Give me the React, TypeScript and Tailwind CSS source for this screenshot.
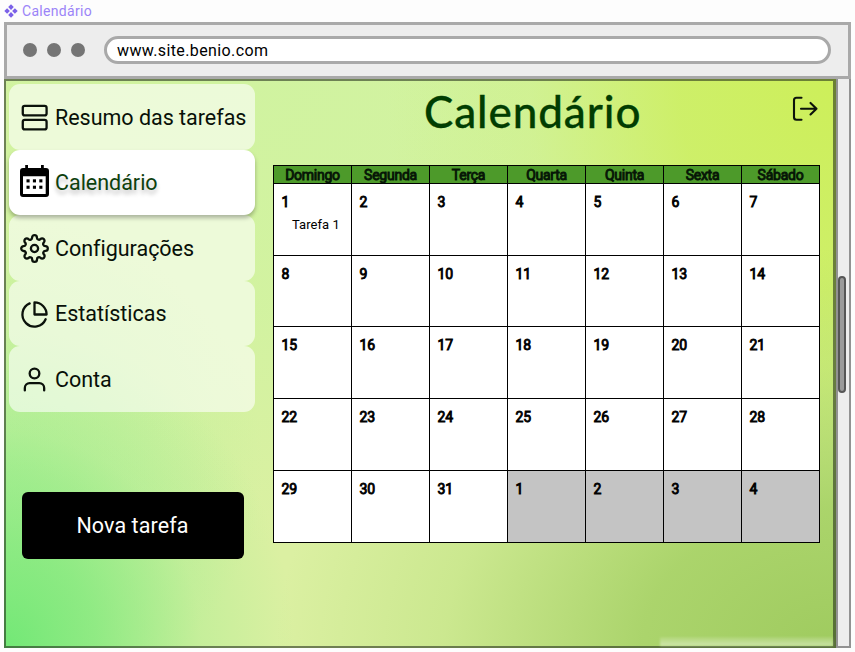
import type { ReactNode } from "react";

const roboto = "font-['Roboto',sans-serif]";

function Stroke({ children, className = "" }: { children: ReactNode; className?: string }) {
  return (
    <svg
      viewBox="0 0 24 24"
      className={`size-[29px] shrink-0 ${className}`}
      fill="none"
      stroke="#0b120b"
      strokeWidth={1.9}
      strokeLinecap="round"
      strokeLinejoin="round"
    >
      {children}
    </svg>
  );
}

const RowsIcon = (
  <Stroke>
    <rect x="2.3" y="2.300" width="19.7" height="7.900" rx="1.6" />
    <rect x="2.3" y="14" width="19.7" height="7.900" rx="1.6" />
  </Stroke>
);

const CalendarIcon = (
  <svg viewBox="0 0 29 32" className="-mt-[3px] h-8 w-[29px] shrink-0">
    <path
      fill="#000"
      fillRule="evenodd"
      d="M5.200 0h2.800v3h13V0h2.800v3H26a3 3 0 0 1 3 3v23a3 3 0 0 1-3 3H3a3 3 0 0 1-3-3V6a3 3 0 0 1 3-3h2.200zM3 11.200V29h22.700V11.200z"
    />
    {[6.5, 12.9, 19.3].map((x) =>
      [14.3, 20.7].map((y) => <rect key={`${x}-${y}`} x={x} y={y} width="3.1" height="3.1" fill="#000" />),
    )}
  </svg>
);

const GearIcon = (
  <Stroke>
    <circle cx="12" cy="12" r="3" />
    <path d="M19.4 15a1.65 1.65 0 0 0 .33 1.82l.06.06a2 2 0 0 1 0 2.83 2 2 0 0 1-2.83 0l-.06-.06a1.65 1.65 0 0 0-1.82-.33 1.65 1.65 0 0 0-1 1.51V21a2 2 0 0 1-2 2 2 2 0 0 1-2-2v-.09A1.65 1.65 0 0 0 9 19.4a1.65 1.65 0 0 0-1.82.33l-.06.06a2 2 0 0 1-2.83 0 2 2 0 0 1 0-2.83l.06-.06a1.65 1.65 0 0 0 .33-1.82 1.65 1.65 0 0 0-1.51-1H3a2 2 0 0 1-2-2 2 2 0 0 1 2-2h.09A1.65 1.65 0 0 0 4.6 9a1.65 1.65 0 0 0-.33-1.82l-.06-.06a2 2 0 0 1 0-2.83 2 2 0 0 1 2.83 0l.06.06a1.65 1.65 0 0 0 1.82.33H9a1.65 1.65 0 0 0 1-1.51V3a2 2 0 0 1 2-2 2 2 0 0 1 2 2v.09a1.65 1.65 0 0 0 1 1.51 1.65 1.65 0 0 0 1.82-.33l.06-.06a2 2 0 0 1 2.83 0 2 2 0 0 1 0 2.83l-.06.06a1.65 1.65 0 0 0-.33 1.82V9a1.65 1.65 0 0 0 1.51 1H21a2 2 0 0 1 2 2 2 2 0 0 1-2 2h-.09a1.65 1.65 0 0 0-1.51 1z" />
  </Stroke>
);

const PieIcon = (
  <Stroke>
    <path d="M21.21 15.89A10 10 0 1 1 8 2.83" />
    <path d="M22 12A10 10 0 0 0 12 2v10z" />
  </Stroke>
);

const UserIcon = (
  <Stroke>
    <path d="M20 21v-2a4 4 0 0 0-4-4H8a4 4 0 0 0-4 4v2" />
    <circle cx="12" cy="7" r="4" />
  </Stroke>
);

const items = [
  { label: "Resumo das tarefas", icon: RowsIcon },
  { label: "Calendário", icon: CalendarIcon, active: true },
  { label: "Configurações", icon: GearIcon },
  { label: "Estatísticas", icon: PieIcon },
  { label: "Conta", icon: UserIcon },
];

const weekdays = ["Domingo", "Segunda", "Terça", "Quarta", "Quinta", "Sexta", "Sábado"];
const days = Array.from({ length: 35 }, (_, i) => ({ n: i < 31 ? i + 1 : i - 30, next: i >= 31 }));

function Sidebar() {
  return (
    <aside className="flex w-[249px] shrink-0 flex-col pt-[3px] pl-[3px]">
      <nav className="flex h-[328px] flex-col">
        {items.map(({ label, icon, active }) => (
          <a
            key={label}
            className={`flex flex-1 items-center gap-[6px] rounded-[11px] pt-px pl-[11px] text-[21.5px] tracking-[-0.02px] whitespace-nowrap ${
              active
                ? "relative bg-white text-[#0d400d] shadow-[0_3px_4px_rgba(0,0,0,0.28)] [&>span]:[text-shadow:0_4px_4px_rgba(0,0,0,0.25)]"
                : "bg-white/60 text-[#081008]"
            }`}
          >
            {icon}
            <span className="pt-px">{label}</span>
          </a>
        ))}
      </nav>
      <button className="mt-20 ml-[13px] h-[67px] w-[222px] rounded-[6px] bg-black pt-[2px] pr-px text-[21.5px] tracking-[0.1px] text-white">
        Nova tarefa
      </button>
    </aside>
  );
}

function Calendar() {
  return (
    <div className="ml-[18px] grid w-[547px] grid-cols-[repeat(7,78px)] grid-rows-[18px_72px_71px_72px_72px_72px] border-t border-l border-black">
      {weekdays.map((d) => (
        <div
          key={d}
          className="flex items-center justify-center border-r border-b border-black bg-[#4d9a2a] text-[14px] leading-none tracking-[-0.25px] text-[#061606] [-webkit-text-stroke:0.9px_#061606]"
        >
          {d}
        </div>
      ))}
      {days.map(({ n, next }, i) => (
        <div
          key={i}
          className={`border-r border-b border-black pt-[10px] pl-[7.5px] text-[14px] leading-4 text-black ${
            next ? "bg-[#c4c4c4]" : "bg-white"
          }`}
        >
          <div className="tracking-[-0.2px] [-webkit-text-stroke:0.9px_black]">{n}</div>
          {i === 0 && <div className="mt-[7px] ml-[10.5px] text-[13px] tracking-[0.05px] whitespace-nowrap">Tarefa 1</div>}
        </div>
      ))}
    </div>
  );
}

export default function App() {
  return (
    <div className={`h-[652px] w-[855px] overflow-hidden bg-[#fdfdfd] ${roboto}`}>
      <div className="flex h-[22px] items-center gap-1 pl-1 text-[14px] tracking-[0.3px] text-[#9b84f8]">
        <svg viewBox="0 0 14 14" className="size-[14px]" fill="#7b61e8">
          <path d="M7 .3l2.8 2.8L7 5.900 4.200 3.100zM7 8.100l2.800 2.800L7 13.700 4.200 10.900zM.3 7l2.800-2.800L5.900 7 3.100 9.800zM8.100 7l2.800-2.800L13.700 7l-2.800 2.800z" />
        </svg>
        <span>Calendário</span>
      </div>

      <div className="ml-1 w-[847px]">
        <header className="flex h-[57px] items-center border-[3px] border-[#a9a9a9] bg-[#ededed] pb-px pl-[16px]">
          <div className="flex gap-[10px]">
            {[0, 1, 2].map((i) => (
              <span key={i} className="size-[14px] rounded-full bg-[#757575]" />
            ))}
          </div>
          <div className="ml-[19px] flex h-7 w-[727px] items-center rounded-full border-[3px] border-[#a9a9a9] bg-white pt-[2px] pl-[10px] text-[16px] tracking-[0.38px] text-black">
            www.site.benio.com
          </div>
        </header>

        <div className="flex h-[569px]">
          <main className="relative flex w-[832px] border-2 border-r-[3px] border-[#1c2416]/55 bg-[#dbf0a2] [background-origin:border-box] [background-image:radial-gradient(ellipse_290px_320px_at_0%_100%,#72e876_0%,#74e878b3_32%,#86ea8440_68%,#90ee8c00_100%),radial-gradient(ellipse_260px_250px_at_0%_68%,#98ee9077_0%,#a0ee9444_50%,#a8ee9a00_100%),radial-gradient(ellipse_560px_400px_at_100%_100%,#9fcb5f_0%,#a4d064dd_35%,#acd86a55_70%,#b4dd7000_100%),radial-gradient(ellipse_450px_600px_at_100%_0%,#cdef5a_0%,#ccef60dd_35%,#ccf07855_68%,#ccf08000_100%),radial-gradient(ellipse_600px_470px_at_25%_0%,#d0f3a0_0%,#d0f3a0cc_50%,#d4f3a000_100%)]">
            <Sidebar />
            <section className="flex flex-1 flex-col">
              <div className="flex h-[84px] justify-between">
                <h1 className="mt-[2px] ml-[169px] font-['Lato',sans-serif] text-[44px] leading-[56px] font-medium tracking-[0.9px] text-[#013d01] [-webkit-text-stroke:0.3px_#013d01]">
                  Calendário
                </h1>
                <svg
                  viewBox="0 0 26 26"
                  className="mt-[15px] mr-[15px] size-[26px]"
                  fill="none"
                  stroke="#0b120b"
                  strokeWidth="2.1"
                  strokeLinecap="round"
                  strokeLinejoin="round"
                >
                  <path d="M9.500 1.700H4.500A2.500 2.500 0 0 0 2 4.200v17a2.500 2.500 0 0 0 2.500 2.500H9.500M9 12.700h15.500M18.500 6.900l6 5.800-6 5.800" />
                </svg>
              </div>
              <Calendar />
            </section>
            <div className="absolute right-0 bottom-0 h-[9px] w-[173px] bg-linear-to-b from-white/10 to-white/45 blur-[1px]" />
          </main>
          <div className="flex flex-1 items-start border-r-[2px] border-b-[2px] border-l-2 border-[#929292] bg-[#ededed] pt-[197px]">
            <div className="h-[117px] w-[8px] rounded-full border-2 border-[#565656] bg-[#9b9b9b]" />
          </div>
        </div>
      </div>
    </div>
  );
}
